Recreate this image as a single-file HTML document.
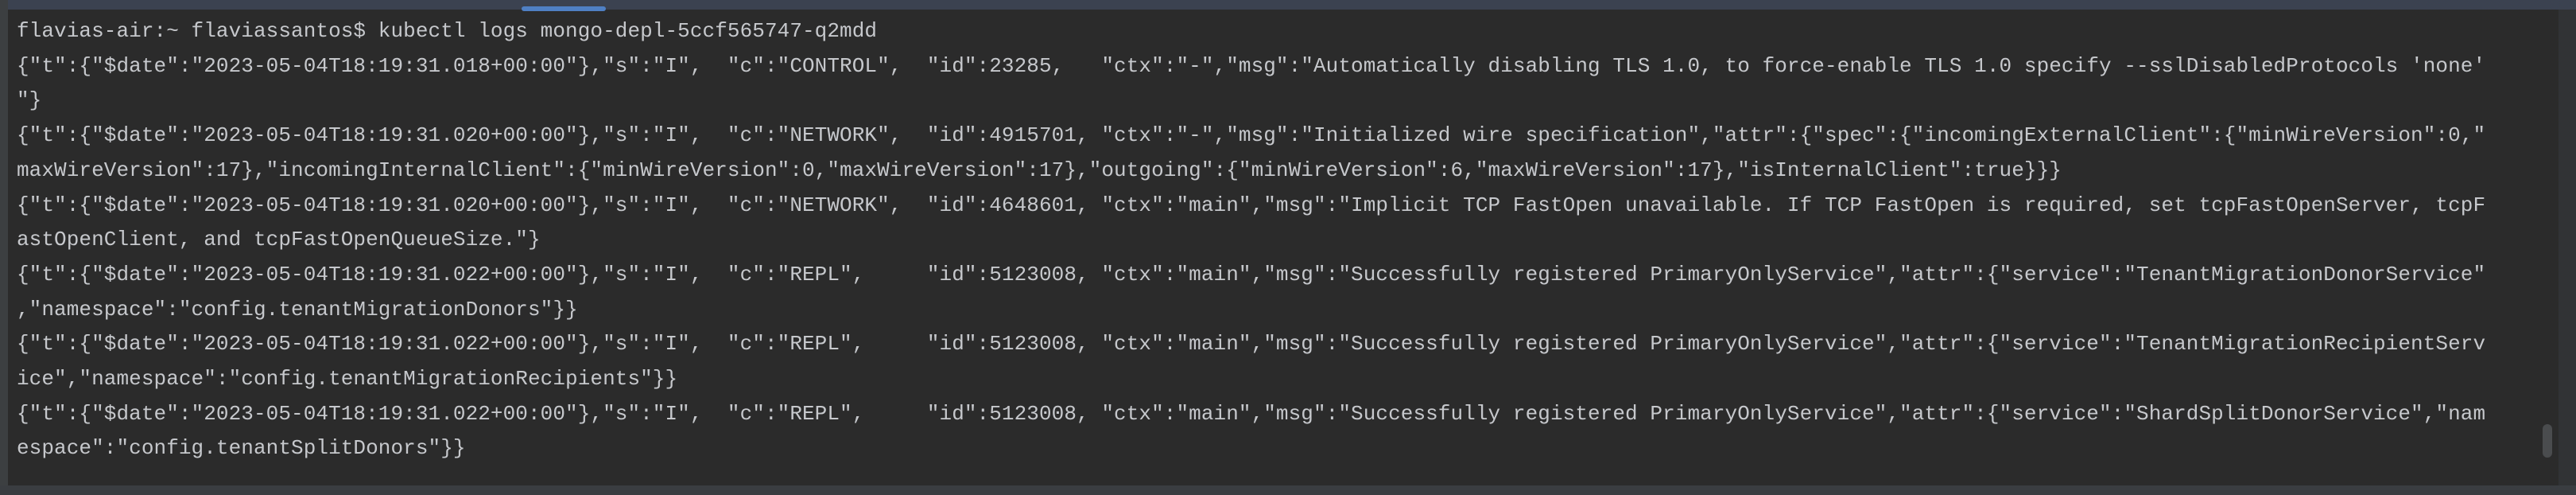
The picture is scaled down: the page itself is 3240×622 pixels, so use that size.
<!DOCTYPE html>
<html><head><meta charset="utf-8"><style>
html,body{margin:0;padding:0;}
body{width:3240px;height:622px;background:#2b2b2b;position:relative;overflow:hidden;}
.top{position:absolute;left:0;top:0;width:3240px;height:12px;background:#3b4250;}
.tab{position:absolute;left:656px;top:8px;width:106px;height:6px;background:#4f80c4;border-radius:3px;}
.left{position:absolute;left:0;top:0;width:10px;height:622px;background:#3c3f41;}
.right{position:absolute;left:3218px;top:12px;width:22px;height:600px;background:#313335;}
.thumb{position:absolute;left:3198px;top:533px;width:12px;height:42px;background:#4a4c4e;border-radius:6px;}
.bottom{position:absolute;left:0;top:610px;width:3240px;height:12px;background:#3a3d41;}
pre{position:absolute;left:21px;top:18px;margin:0;font-family:"Liberation Mono",monospace;font-size:26px;letter-spacing:0.08px;line-height:43.7px;color:#c6c8cc;}
</style></head><body>
<div class="top"></div><div class="tab"></div><div class="left"></div>
<pre>flavias-air:~ flaviassantos$ kubectl logs mongo-depl-5ccf565747-q2mdd
{"t":{"$date":"2023-05-04T18:19:31.018+00:00"},"s":"I",  "c":"CONTROL",  "id":23285,   "ctx":"-","msg":"Automatically disabling TLS 1.0, to force-enable TLS 1.0 specify --sslDisabledProtocols 'none'
"}
{"t":{"$date":"2023-05-04T18:19:31.020+00:00"},"s":"I",  "c":"NETWORK",  "id":4915701, "ctx":"-","msg":"Initialized wire specification","attr":{"spec":{"incomingExternalClient":{"minWireVersion":0,"
maxWireVersion":17},"incomingInternalClient":{"minWireVersion":0,"maxWireVersion":17},"outgoing":{"minWireVersion":6,"maxWireVersion":17},"isInternalClient":true}}}
{"t":{"$date":"2023-05-04T18:19:31.020+00:00"},"s":"I",  "c":"NETWORK",  "id":4648601, "ctx":"main","msg":"Implicit TCP FastOpen unavailable. If TCP FastOpen is required, set tcpFastOpenServer, tcpF
astOpenClient, and tcpFastOpenQueueSize."}
{"t":{"$date":"2023-05-04T18:19:31.022+00:00"},"s":"I",  "c":"REPL",     "id":5123008, "ctx":"main","msg":"Successfully registered PrimaryOnlyService","attr":{"service":"TenantMigrationDonorService"
,"namespace":"config.tenantMigrationDonors"}}
{"t":{"$date":"2023-05-04T18:19:31.022+00:00"},"s":"I",  "c":"REPL",     "id":5123008, "ctx":"main","msg":"Successfully registered PrimaryOnlyService","attr":{"service":"TenantMigrationRecipientServ
ice","namespace":"config.tenantMigrationRecipients"}}
{"t":{"$date":"2023-05-04T18:19:31.022+00:00"},"s":"I",  "c":"REPL",     "id":5123008, "ctx":"main","msg":"Successfully registered PrimaryOnlyService","attr":{"service":"ShardSplitDonorService","nam
espace":"config.tenantSplitDonors"}}</pre>
<div class="right"></div><div class="thumb"></div><div class="bottom"></div>
</body></html>
